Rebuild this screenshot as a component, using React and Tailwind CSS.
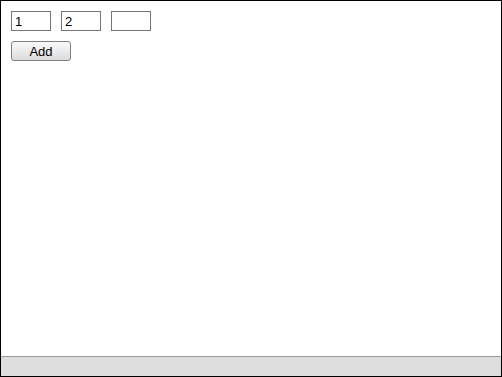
import React, { useState } from 'react';

export default function App() {
  const [values, setValues] = useState(['1', '2', '']);

  const update = (i, v) => {
    const next = [...values];
    next[i] = v;
    setValues(next);
  };

  return (
    <div className="w-[502px] h-[377px] border border-black bg-white flex flex-col font-['Liberation_Sans',Arial,sans-serif] text-[13px] text-black">
      <div className="flex-1 pt-[10px] pl-[10px]">
        {/* Inputs row */}
        <div className="flex gap-[10px]">
          {values.map((v, i) => (
            <input
              key={i}
              type="text"
              value={v}
              onChange={(e) => update(i, e.target.value)}
              className="w-[40px] h-[20px] border border-[#767676] px-[3px] text-[13px] leading-none outline-none bg-white"
            />
          ))}
        </div>
        {/* Add button */}
        <button
          type="button"
          className="mt-[10px] w-[60px] h-[20px] border border-[#808080] rounded-[3px] bg-gradient-to-b from-[#fafafa] to-[#dcdcdc] text-[13px] leading-none flex items-center justify-center"
        >
          Add
        </button>
      </div>
      {/* Footer bar */}
      <div className="h-[20px] border-t border-[#999] bg-[#dddddd]" />
    </div>
  );
}
